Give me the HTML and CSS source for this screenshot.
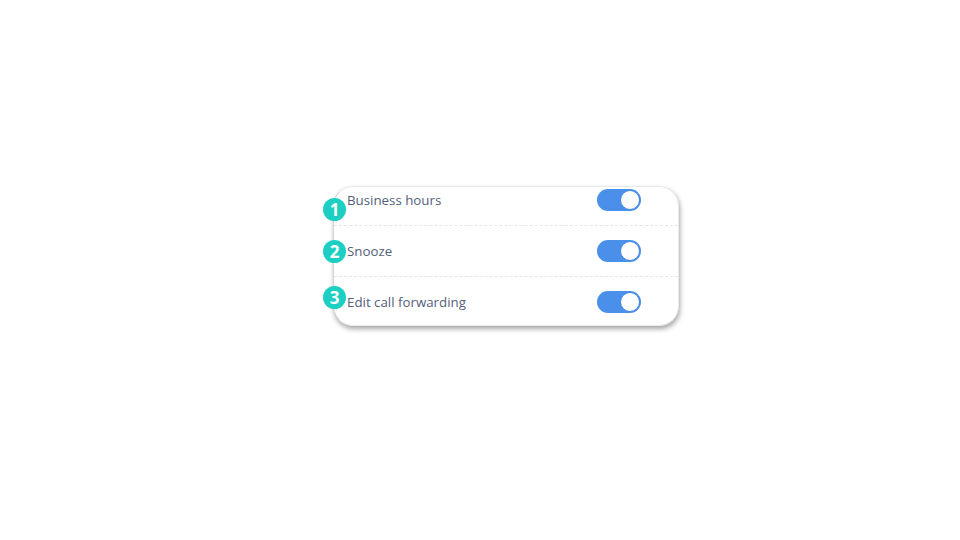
FILE: index.html
```html
<!DOCTYPE html>
<html>
<head>
<meta charset="utf-8">
<link rel="stylesheet" href="styles.css">
</head>
<body>
<div class="stage">
  <div class="card">
    <div class="row row-first">
      <span class="badge badge-1">1</span>
      <span class="label">Business hours</span>
      <span class="toggle"><span class="knob"></span></span>
    </div>
    <div class="row">
      <span class="badge badge-2">2</span>
      <span class="label">Snooze</span>
      <span class="toggle"><span class="knob"></span></span>
    </div>
    <div class="row row-last">
      <span class="badge badge-3">3</span>
      <span class="label">Edit call forwarding</span>
      <span class="toggle"><span class="knob"></span></span>
    </div>
  </div>
</div>
</body>
</html>
```

FILE: styles.css
```css
html, body {
  margin: 0;
  padding: 0;
  background: #ffffff;
  font-family: "Open Sans", "Noto Sans", sans-serif;
}

.stage {
  width: 960px;
  height: 540px;
  padding: 186px 0 0 333px;
  box-sizing: border-box;
}

.card {
  width: 346px;
  box-sizing: border-box;
  background: #ffffff;
  border: 1px solid #e9e9e9;
  border-left-color: #d4d4d4;
  border-radius: 20px;
  box-shadow: 1px 3px 5px rgba(0, 0, 0, 0.35);
  display: flex;
  flex-direction: column;
}

.row {
  position: relative;
  display: flex;
  align-items: center;
  justify-content: space-between;
  padding: 14px 37px 14px 13px;
  border-bottom: 1px dashed #e6e6e6;
}

.row-first {
  padding-top: 2px;
}

.row-last {
  border-bottom: none;
  padding-bottom: 12px;
}

.label {
  font-size: 13.3px;
  color: #545f7b;
  line-height: 22px;
}

.toggle {
  width: 44px;
  height: 22px;
  border-radius: 11px;
  background: #4a8fe9;
  box-sizing: border-box;
  padding: 1px;
  display: flex;
  justify-content: flex-end;
}

.knob {
  width: 20px;
  height: 20px;
  border-radius: 50%;
  background: #ffffff;
  box-sizing: border-box;
  border: 1px solid #3f86e3;
}

.badge {
  position: absolute;
  left: -11px;
  width: 23px;
  height: 23px;
  border-radius: 50%;
  background: #1ccfc2;
  color: #ffffff;
  font-weight: 700;
  font-size: 17px;
  line-height: 23px;
  text-align: center;
}

.badge-1 { top: 11px; }
.badge-2 { top: 14px; }
.badge-3 { top: 9px; }
```
